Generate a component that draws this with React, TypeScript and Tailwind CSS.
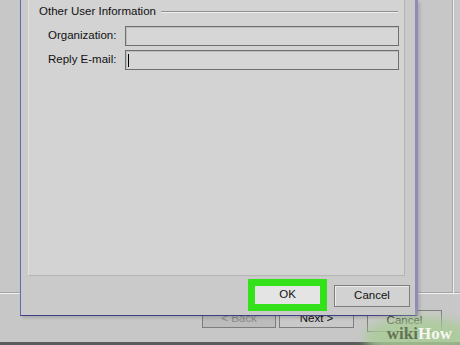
const font = { fontFamily: '"Liberation Sans", Arial, sans-serif' };

function Field({ label, cursor }: { label: string; cursor?: boolean }) {
  return (
    <div className="flex items-center h-[20px]">
      <div className="w-[96px] pl-[19px] text-[11.5px] text-[#111]">{label}</div>
      <div className="relative flex-1 h-[20px] mr-[5px] border border-[#6f6f6f] bg-[#d6d6d6] shadow-[inset_1px_1px_0_#bdbdbd]">
        {cursor && <div className="absolute left-[2px] top-[3px] w-px h-[13px] bg-black" />}
      </div>
    </div>
  );
}

function WinButton({ children, className }: { children: string; className: string }) {
  return (
    <div className={`flex items-center justify-center border border-[#7d7d7d] text-[11.5px] ${className}`}>
      {children}
    </div>
  );
}

export default function App() {
  return (
    <div className="relative w-[460px] h-[345px] overflow-hidden bg-[#c7c7c7]" style={font}>
      {/* Wizard window behind */}
      <div className="flex flex-col h-full">
        <div className="flex h-[294px] border-b border-[#f2f2f2] shadow-[0_-1px_0_#a3a3a3_inset]">
          <div className="w-[453px] border-r border-[#a9a9a9] shadow-[1px_0_0_#eeeeee]" />
        </div>
        <div className="flex flex-1 pt-[16px] pl-[202px]">
          <WinButton className="w-[74px] h-[18px] bg-[#bcbcbc] text-[#8a8a8a]">&lt; Back</WinButton>
          <WinButton className="ml-[3px] w-[75px] h-[18px] bg-[#c9c9c9] text-[#111]">Next &gt;</WinButton>
          <WinButton className="ml-[13px] w-[75px] h-[22px] bg-[#c9c9c9] text-[#111]">Cancel</WinButton>
        </div>
        <div className="h-[3px] bg-[#5b5b5b]" />
      </div>

      {/* Dialog window */}
      <div className="absolute left-[20px] top-0 w-[398px] h-[316px] flex flex-col bg-[#cacaca] border-l border-l-[#5f6db0] border-r-[3px] border-r-[#8f8cb8] border-b border-b-[#3f3f84] shadow-[2px_2px_3px_rgba(0,0,0,0.15)]">
        <div className="ml-[7px] mr-[10px] h-[276px] flex flex-col bg-[#d3d3d3] border-l border-l-[#e2e2e2] border-r border-r-[#b5b5b5] border-b border-b-[#b5b5b5]">
          <div className="flex items-center h-[24px] pl-[10px]">
            <span className="text-[11.5px] text-[#111]">Other User Information</span>
            <div className="flex-1 ml-[5px] mr-[6px] h-[2px] border-t border-[#8f8f8f] border-b border-b-[#efefef]" />
          </div>
          <div className="mt-[2px] flex flex-col gap-[4px]">
            <Field label="Organization:" />
            <Field label="Reply E-mail:" cursor />
          </div>
        </div>
        <div className="flex flex-1 items-start pt-[3px] pl-[227px]">
          <div className="w-[79px] h-[32px] p-[7px] bg-[#33e21a]">
            <div className="h-full flex items-center justify-center bg-[#e4e4e4] text-[11.5px] text-[#111]">OK</div>
          </div>
          <WinButton className="ml-[7px] mt-[6px] w-[76px] h-[22px] bg-[#d2d2d2] text-[#111] shadow-[inset_1px_1px_0_#ececec]">Cancel</WinButton>
        </div>
      </div>

      {/* wikiHow watermark */}
      <div className="absolute right-[-14px] bottom-[-12px] w-[110px] h-[40px] rounded-[50%] bg-[#a9cc96] opacity-80 blur-[5px]" />
      <div className="absolute right-[8px] bottom-[3px] text-[17px] font-bold leading-none" style={{ fontFamily: '"Liberation Serif", serif' }}>
        <span className="text-[#637455]">wiki</span>
        <span className="text-[#f5f7ef]">How</span>
      </div>
    </div>
  );
}
